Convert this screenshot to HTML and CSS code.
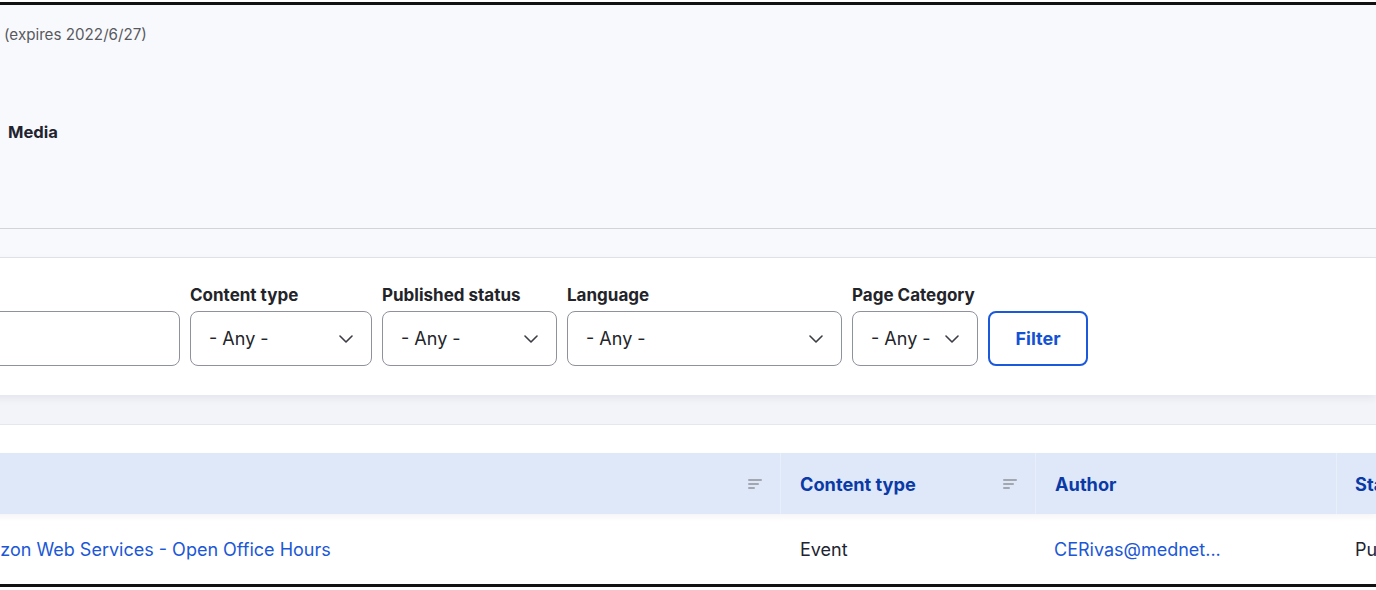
FILE: index.html
```html
<!DOCTYPE html>
<html lang="en">
<head>
<meta charset="utf-8">
<title>Content</title>
<link rel="stylesheet" href="styles.css">
</head>
<body>
<div class="frame">
  <section class="summary">
    <p class="expires">(expires 2022/6/27)</p>
    <h3 class="media">Media</h3>
  </section>
  <div class="band"></div>
  <form class="filters">
    <div class="field field-title">
      <div class="control text-input"></div>
    </div>
    <div class="field w-type">
      <label class="label">Content type</label>
      <div class="control select"><span>- Any -</span><svg class="chev" width="14" height="8" viewBox="0 0 14 8"><path d="M1 1l6 6 6-6" fill="none" stroke="#3c3e46" stroke-width="1.6" stroke-linecap="round" stroke-linejoin="round"/></svg></div>
    </div>
    <div class="field w-status">
      <label class="label">Published status</label>
      <div class="control select"><span>- Any -</span><svg class="chev" width="14" height="8" viewBox="0 0 14 8"><path d="M1 1l6 6 6-6" fill="none" stroke="#3c3e46" stroke-width="1.6" stroke-linecap="round" stroke-linejoin="round"/></svg></div>
    </div>
    <div class="field w-lang">
      <label class="label">Language</label>
      <div class="control select"><span>- Any -</span><svg class="chev" width="14" height="8" viewBox="0 0 14 8"><path d="M1 1l6 6 6-6" fill="none" stroke="#3c3e46" stroke-width="1.6" stroke-linecap="round" stroke-linejoin="round"/></svg></div>
    </div>
    <div class="field w-cat">
      <label class="label">Page Category</label>
      <div class="control select"><span>- Any -</span><svg class="chev" width="14" height="8" viewBox="0 0 14 8"><path d="M1 1l6 6 6-6" fill="none" stroke="#3c3e46" stroke-width="1.6" stroke-linecap="round" stroke-linejoin="round"/></svg></div>
    </div>
    <div class="field w-btn">
      <button type="button" class="btn">Filter</button>
    </div>
  </form>
  <div class="band band-2"></div>
  <div class="pre-table"></div>
  <div class="table">
    <div class="thead">
      <div class="th th-first"><svg class="sort" width="14" height="10" viewBox="0 0 14 10"><rect x="0" y="0" width="14" height="2" rx="1" fill="#a3a7b0"/><rect x="0" y="4" width="11" height="2" rx="1" fill="#a3a7b0"/><rect x="0" y="8" width="7" height="2" rx="1" fill="#a3a7b0"/></svg></div>
      <div class="th"><span class="th-text">Content type</span><svg class="sort" width="14" height="10" viewBox="0 0 14 10"><rect x="0" y="0" width="14" height="2" rx="1" fill="#a3a7b0"/><rect x="0" y="4" width="11" height="2" rx="1" fill="#a3a7b0"/><rect x="0" y="8" width="7" height="2" rx="1" fill="#a3a7b0"/></svg></div>
      <div class="th"><span class="th-text">Author</span></div>
      <div class="th th-last"><span class="th-text">Status</span></div>
    </div>
    <div class="tr">
      <div class="td"><a class="link" href="#">Amazon Web Services - Open Office Hours</a></div>
      <div class="td">Event</div>
      <div class="td"><a class="link" href="#">CERivas@mednet...</a></div>
      <div class="td">Published</div>
    </div>
  </div>
</div>
</body>
</html>
```

FILE: styles.css
```css
html, body {
  margin: 0;
  padding: 0;
  overflow: hidden;
  background: #ffffff;
}
body {
  padding-top: 2px;
  font-family: Inter, "Noto Sans", "Liberation Sans", sans-serif;
  color: #232429;
}
.frame {
  border-top: 3px solid #111111;
  border-bottom: 3px solid #111111;
  overflow: hidden;
}
.summary {
  height: 223px;
  background: #f8f9fc;
  border-bottom: 1px solid #d3d4d9;
  display: flex;
  flex-direction: column;
}
.expires {
  margin: 0;
  padding: 20px 0 0 4px;
  font-size: 15.2px;
  line-height: 20px;
  color: #58595f;
}
.media {
  margin: 0;
  padding: 77px 0 0 8px;
  font-size: 16.6px;
  line-height: 20px;
  font-weight: 700;
  color: #222330;
}
.band {
  height: 28px;
  background: #f8f9fc;
  border-bottom: 1px solid #e3e4e8;
}
.band-2 {
  height: 29px;
  background: #f3f4f9;
  border-bottom: 1px solid #e6e7eb;
}
.filters {
  position: relative;
  height: 137px;
  box-sizing: border-box;
  background: #ffffff;
  box-shadow: 0 3px 8px rgba(30, 40, 90, 0.07);
  display: flex;
  align-items: flex-end;
  gap: 10px;
  padding-bottom: 29px;
  margin-left: -200px;
}
.field {
  display: flex;
  flex-direction: column;
  gap: 6px;
  flex: none;
}
.label {
  font-size: 17px;
  line-height: 20px;
  font-weight: 700;
  color: #232429;
  white-space: nowrap;
}
.control {
  height: 55px;
  box-sizing: border-box;
  border: 1px solid #8e929c;
  border-radius: 8px;
  background: #ffffff;
}
.field-title { width: 380px; }
.w-type { width: 182px; }
.w-status { width: 175px; }
.w-lang { width: 275px; }
.w-cat { width: 126px; }
.select {
  display: flex;
  align-items: center;
  justify-content: space-between;
  padding: 0 18px 0 18px;
  font-size: 18px;
  color: #232429;
  white-space: nowrap;
}
.chev { flex: none; }
.btn {
  width: 100px;
  height: 55px;
  box-sizing: border-box;
  border: 2px solid #1b59dc;
  border-radius: 8px;
  background: #ffffff;
  color: #1452d4;
  font-family: Inter, "Noto Sans", "Liberation Sans", sans-serif;
  font-size: 18px;
  font-weight: 700;
}
.pre-table {
  height: 28px;
  background: #ffffff;
}
.table {
  margin-left: -57px;
}
.thead, .tr {
  display: grid;
  grid-template-columns: 838px 255px 301px 320px;
}
.thead {
  position: relative;
  height: 61px;
  background: #dfe8f9;
  box-shadow: 0 3px 6px rgba(30, 40, 90, 0.05);
}
.th {
  display: flex;
  align-items: center;
  justify-content: space-between;
  padding: 0 18px 0 19px;
  border-right: 1px solid #e8eefa;
  font-size: 18.2px;
  font-weight: 700;
  color: #0a3aa6;
  white-space: nowrap;
}
.th-first { justify-content: flex-end; }
.th-last { border-right: none; padding-left: 18px; }
.sort { flex: none; margin-top: 1px; }
.tr {
  height: 70px;
  align-items: center;
}
.td {
  padding: 0 18px 0 19px;
  font-size: 18px;
  color: #222330;
  white-space: nowrap;
}
.td:nth-child(3), .td:nth-child(4) { padding-left: 18px; }
.link {
  color: #1b57d6;
  text-decoration: none;
}
```
